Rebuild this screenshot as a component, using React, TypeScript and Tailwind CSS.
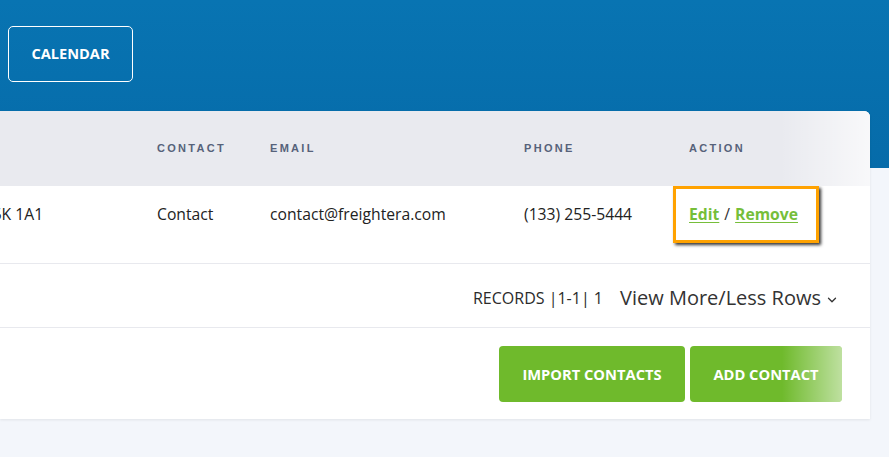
import { ChevronDown } from "lucide-react";

const cols = ["w-[157px]", "w-[113px]", "w-[254px]", "w-[165px]", "flex-1"];

export default function App() {
  return (
    <div className="min-h-screen bg-[#f3f6fb] font-['Open_Sans',sans-serif] text-[#222]">
      {/* blue banner */}
      <div className="h-[168px] bg-gradient-to-b from-[#0874b2] to-[#066ba9] pl-2 pt-[26px]">
        <button className="h-[56px] w-[125px] rounded-[5px] border border-white text-[14.6px] font-bold text-white">
          CALENDAR
        </button>
      </div>

      {/* contacts card */}
      <div className="-mt-[57px] w-[870px] overflow-hidden rounded-tr-[6px] bg-white shadow-[0_1px_3px_rgba(0,0,0,0.08)]">
        {/* table head */}
        <div className="relative flex h-[75px] items-center bg-[#e9eaef] font-['Liberation_Sans',sans-serif] text-[11px] font-bold tracking-[2.3px] text-[#56627a]">
          <div className={cols[0]} />
          <div className={cols[1]}>CONTACT</div>
          <div className={cols[2]}>EMAIL</div>
          <div className={cols[3]}>PHONE</div>
          <div className={cols[4]}>ACTION</div>
          <div className="pointer-events-none absolute inset-y-0 right-0 w-[90px] bg-gradient-to-r from-white/0 to-white/70" />
        </div>

        {/* row */}
        <div className="flex h-[78px] items-start border-b border-[#e8e9ee] text-[15.7px] leading-[22px]">
          <div className={`${cols[0]} pt-[17px]`}>
            <span className="-ml-[16px] block">T5K 1A1</span>
          </div>
          <div className={`${cols[1]} pt-[17px]`}>Contact</div>
          <div className={`${cols[2]} pt-[17px]`}>contact@freightera.com</div>
          <div className={`${cols[3]} pt-[17px]`}>(133) 255-5444</div>
          <div className={cols[4]}>
            <div className="-ml-[16px] flex h-[57px] w-[146px] items-center border-[3px] border-[#ffa200] bg-white pb-[1px] pl-[13px] shadow-[2px_2px_3px_rgba(0,0,0,0.8)]">
              <a className="font-bold text-[#76be3a] underline underline-offset-2">Edit</a>
              <span className="mx-[5px] text-[#333]">/</span>
              <a className="font-bold text-[#76be3a] underline underline-offset-2">Remove</a>
            </div>
          </div>
        </div>

        {/* records */}
        <div className="flex h-[64px] items-center justify-end border-b border-[#e8e9ee] pr-[31px] pt-[5px]">
          <span className="text-[16px] font-medium text-[#2b2b2b]">RECORDS |1-1| 1</span>
          <span className="ml-[17px] text-[20px] text-[#333]">View More/Less Rows</span>
          <ChevronDown size={14} strokeWidth={2.2} className="ml-[4px] mt-[3px] text-[#333]" />
        </div>

        {/* actions */}
        <div className="flex h-[91px] items-start justify-end gap-[5px] pr-[28px] pt-[18px]">
          <button className="h-[56px] w-[186px] rounded-[4px] bg-[#6fba2c] text-[14.7px] font-bold text-white">
            IMPORT CONTACTS
          </button>
          <button className="relative h-[56px] w-[152px] overflow-hidden rounded-[4px] bg-[#6fba2c] text-[14.7px] font-bold text-white">
            ADD CONTACT
            <span className="pointer-events-none absolute inset-y-0 right-0 w-[60px] bg-gradient-to-r from-white/0 to-white/55" />
          </button>
        </div>
      </div>
    </div>
  );
}
